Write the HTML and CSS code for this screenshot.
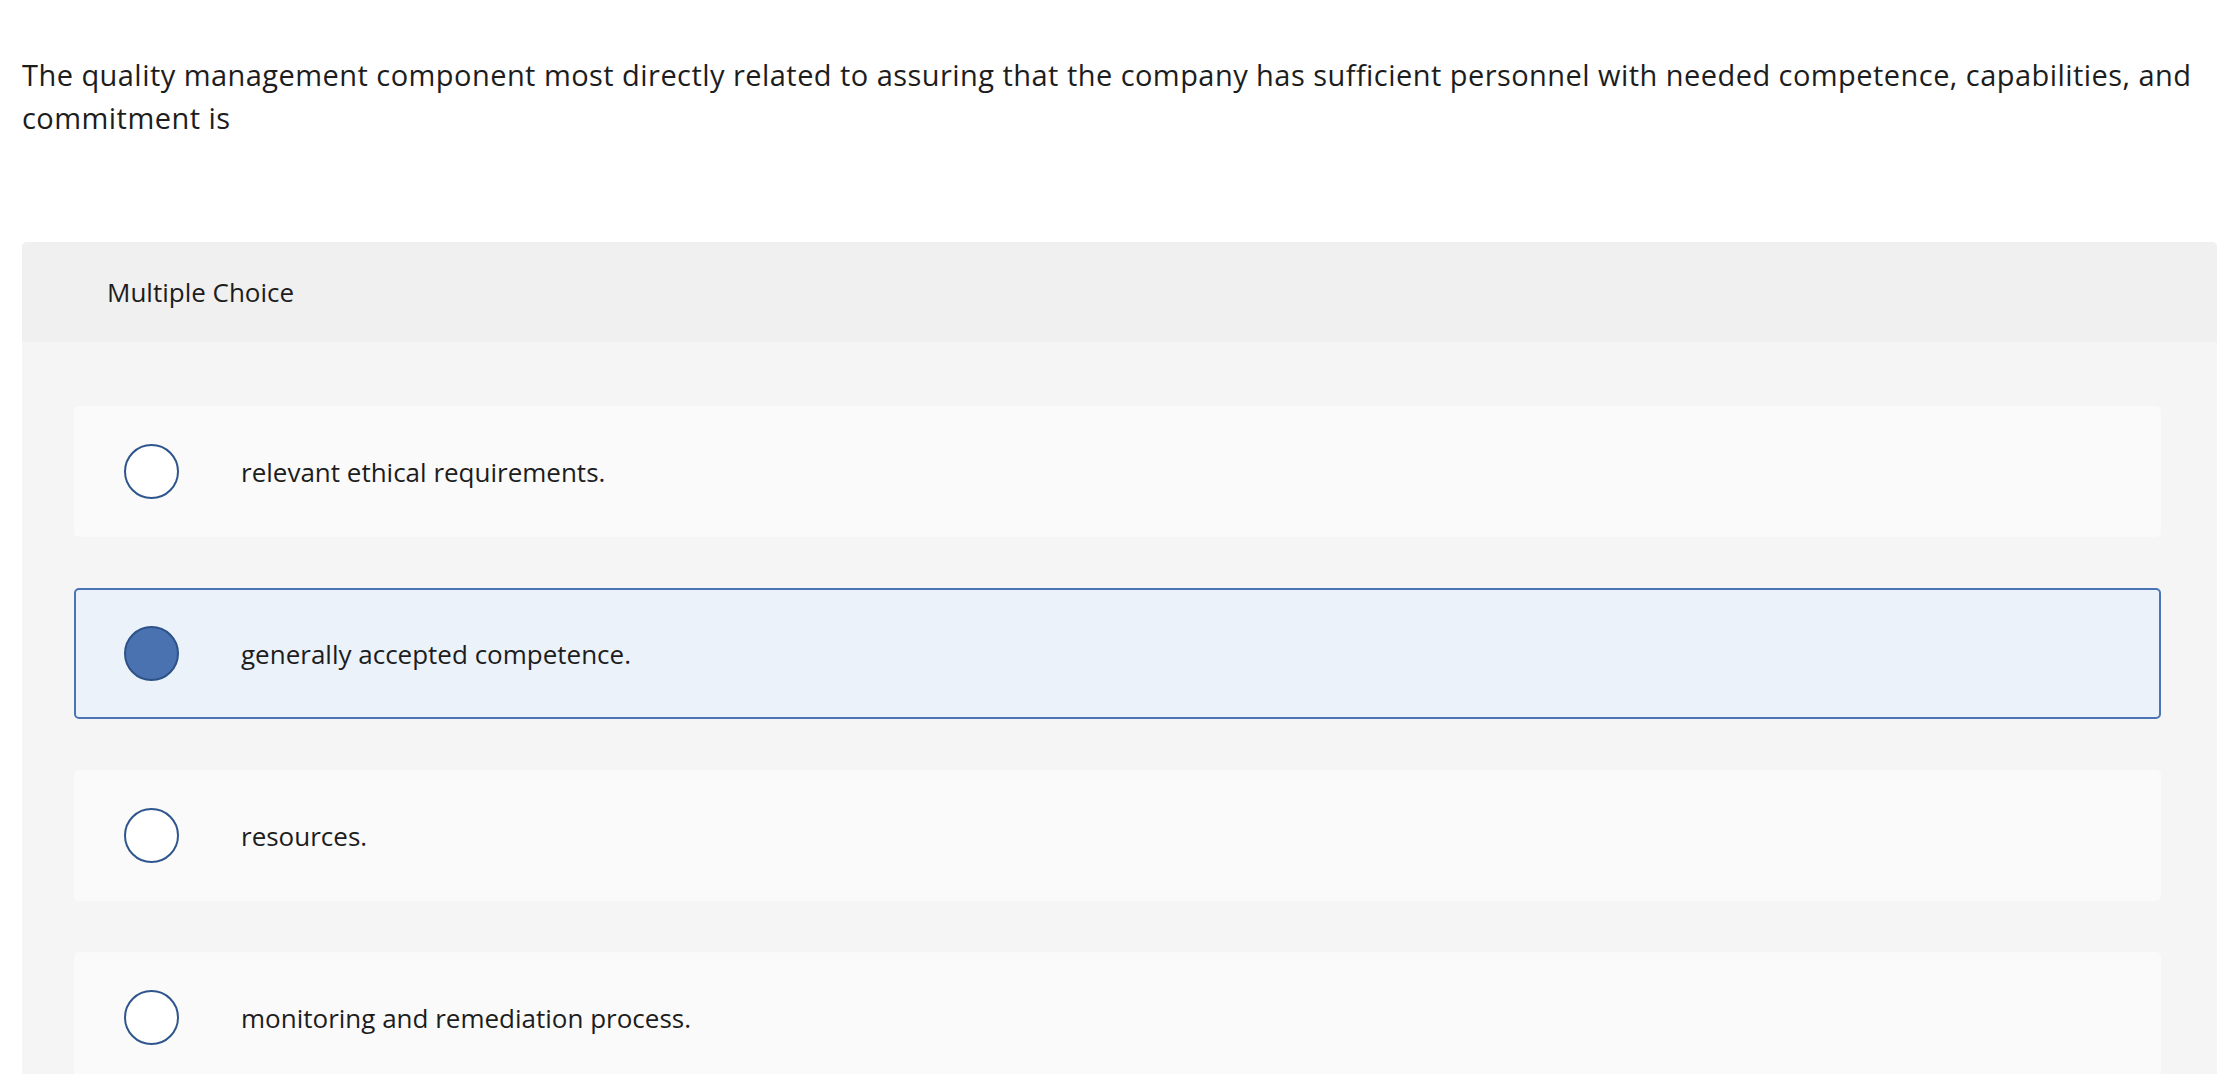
FILE: index.html
```html
<!DOCTYPE html>
<html>
<head>
<meta charset="utf-8">
<link rel="stylesheet" href="styles.css">
</head>
<body>
<div class="page">
  <p class="question">The quality management component most directly related to assuring that the company has sufficient personnel with needed competence, capabilities, and commitment is</p>
  <div class="card">
    <div class="card-head">Multiple Choice</div>
    <div class="card-body">
      <div class="option"><span class="radio"></span><span class="label">relevant ethical requirements.</span></div>
      <div class="option selected"><span class="radio"></span><span class="label">generally accepted competence.</span></div>
      <div class="option"><span class="radio"></span><span class="label">resources.</span></div>
      <div class="option"><span class="radio"></span><span class="label">monitoring and remediation process.</span></div>
    </div>
  </div>
</div>
</body>
</html>
```

FILE: styles.css
```css
html, body {
  margin: 0;
  padding: 0;
  background: #ffffff;
}
body {
  font-family: "Open Sans", "Noto Sans", sans-serif;
  color: #1d1d1d;
}
.page {
  padding: 53px 9px 0 22px;
}
.question {
  margin: 0;
  font-size: 29px;
  letter-spacing: 0.45px;
  line-height: 43px;
}
.card {
  margin-top: 103px;
  border-radius: 5px 5px 0 0;
  overflow: hidden;
  background: #f5f5f5;
}
.card-head {
  height: 100px;
  box-sizing: border-box;
  background: #f0f0f0;
  padding-left: 85px;
  display: flex;
  align-items: center;
  font-size: 26px;
}
.card-body {
  padding: 64px 56px 60px 52px;
  display: flex;
  flex-direction: column;
  gap: 51px;
}
.option {
  height: 131px;
  box-sizing: border-box;
  background: #fafafa;
  border-radius: 5px;
  display: flex;
  align-items: center;
  padding-left: 50px;
  font-size: 26px;
}
.option.selected {
  background: #ebf2fa;
  border: 2px solid #4a74b4;
  padding-left: 48px;
}
.radio {
  width: 55px;
  height: 55px;
  box-sizing: border-box;
  border-radius: 50%;
  border: 2px solid #2e568d;
  background: #ffffff;
  flex: none;
}
.selected .radio {
  background: #4a72b0;
  border-color: #2d5287;
}
.label {
  margin-left: 62px;
}
```
